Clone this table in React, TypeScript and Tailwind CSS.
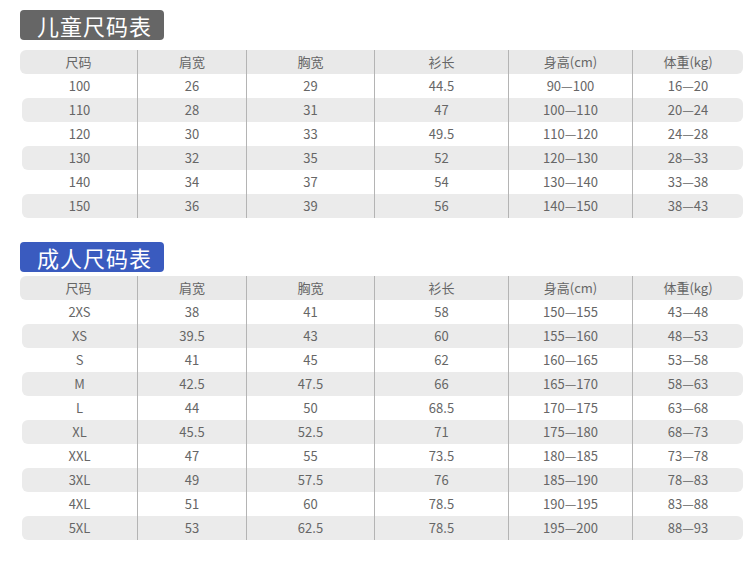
const headers = ["尺码", "肩宽", "胸宽", "衫长", "身高(cm)", "体重(kg)"];

const kids = [
  ["100", "26", "29", "44.5", "90—100", "16—20"],
  ["110", "28", "31", "47", "100—110", "20—24"],
  ["120", "30", "33", "49.5", "110—120", "24—28"],
  ["130", "32", "35", "52", "120—130", "28—33"],
  ["140", "34", "37", "54", "130—140", "33—38"],
  ["150", "36", "39", "56", "140—150", "38—43"],
];

const adults = [
  ["2XS", "38", "41", "58", "150—155", "43—48"],
  ["XS", "39.5", "43", "60", "155—160", "48—53"],
  ["S", "41", "45", "62", "160—165", "53—58"],
  ["M", "42.5", "47.5", "66", "165—170", "58—63"],
  ["L", "44", "50", "68.5", "170—175", "63—68"],
  ["XL", "45.5", "52.5", "71", "175—180", "68—73"],
  ["XXL", "47", "55", "73.5", "180—185", "73—78"],
  ["3XL", "49", "57.5", "76", "185—190", "78—83"],
  ["4XL", "51", "60", "78.5", "190—195", "83—88"],
  ["5XL", "53", "62.5", "78.5", "195—200", "88—93"],
];

const Row = ({ cells, shaded, head }: { cells: string[]; shaded: boolean; head?: boolean }) => {
  return (
    <div
      className={`grid h-6 items-stretch rounded-md text-[13px] text-[#666] ${
        head
          ? "grid-cols-[117px_109px_128px_134px_124px_111px] bg-[#e9e9e9]"
          : "ml-[2px] grid-cols-[115px_109px_128px_134px_124px_111px]"
      } ${shaded && !head ? "bg-[#ebebeb]" : ""}`}
    >
      {cells.map((c, i) => (
        <div
          key={i}
          className={`flex items-center justify-center pb-[1px] leading-none ${
            i > 0 ? "border-l border-[#b4b4b4]" : ""
          }`}
        >
          {c}
        </div>
      ))}
    </div>
  );
};

const SizeTable = ({
  title,
  color,
  rows,
  gap,
}: {
  title: string;
  color: string;
  rows: string[][];
  gap: string;
}) => {
  return (
    <div>
      <div
        className={`flex h-[30px] w-[144px] items-center rounded-[4px] pl-[17px] text-[22px] tracking-[1px] text-white ${color}`}
      >
        {title}
      </div>
      <div className={`w-[723px] ${gap}`}>
        <Row cells={headers} shaded head />
        {rows.map((r, i) => (
          <Row key={i} cells={r} shaded={i % 2 === 1} />
        ))}
      </div>
    </div>
  );
};

export default function App() {
  return (
    <div
      className="h-[561px] w-[750px] bg-white pl-5 pt-[10px]"
      style={{ fontFamily: '"Noto Sans CJK SC", "Noto Sans", sans-serif' }}
    >
      <SizeTable title="儿童尺码表" color="bg-[#666666]" rows={kids} gap="mt-[10px]" />
      <div className="h-6"></div>
      <SizeTable title="成人尺码表" color="bg-[#3a5bbf]" rows={adults} gap="mt-[4px]" />
    </div>
  );
}
